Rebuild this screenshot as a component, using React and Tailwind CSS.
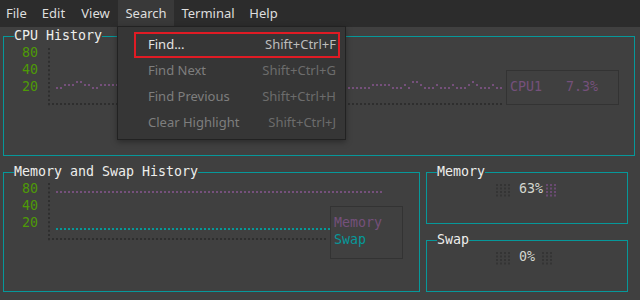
import React from "react";

const MONO = "font-['DejaVu_Sans_Mono',monospace] text-[13.3px] leading-[17px]";
const UI = "font-['Noto_Sans',sans-serif] text-[13px]";

function range(n) {
  return Array.from({ length: n }, (_, i) => i);
}

function Panel({ title, className, children }) {
  return (
    <div className={`relative border border-[#06989a] ${className}`}>
      <span className={`absolute left-[10px] top-[-10px] bg-[#404040] text-[#eeeeec] ${MONO}`}>{title}</span>
      {children}
    </div>
  );
}

function Labels() {
  return (
    <div className={`ml-[18px] flex w-[16px] flex-col text-right text-[#4e9a06] ${MONO}`}>
      <span>80</span>
      <span>40</span>
      <span>20</span>
    </div>
  );
}

const CPU_LEVELS =
  "0011122110011111010000000000000001110000000001111100000000000000001111000000000111110001022100010001000121000100010";

function CpuChart() {
  return (
    <svg width="456" height="62" className="ml-[9px] shrink-0">
      {range(14).map((k) => (
        <rect key={"v" + k} x="1" y={4 + k * 4.25} width="2" height="2" fill="#2e2e2e" />
      ))}
      {range(114).map((k) => (
        <rect key={"h" + k} x={1 + 4 * k} y="59" width="2" height="2" fill="#2e2e2e" />
      ))}
      {range(112).map((i) => {
        const l = Number(CPU_LEVELS[i] || 0);
        const y = l === 0 ? 43 : l === 1 ? 40 : 37;
        return <rect key={"p" + i} x={9 + 4 * i} y={y} width="2" height="2" fill="#75507b" />;
      })}
    </svg>
  );
}

function MemChart() {
  return (
    <svg width="372" height="62" className="ml-[9px] shrink-0">
      {range(14).map((k) => (
        <rect key={"v" + k} x="1" y={3 + k * 4.25} width="2" height="2" fill="#2e2e2e" />
      ))}
      {range(70).map((k) => (
        <rect key={"h" + k} x={1 + 4 * k} y="58" width="2" height="2" fill="#2e2e2e" />
      ))}
      {range(82).map((i) => (
        <rect key={"p" + i} x={9 + 4 * i} y="11" width="2" height="2" fill="#75507b" />
      ))}
      {range(69).map((i) => (
        <rect key={"t" + i} x={9 + 4 * i} y="48" width="2" height="2" fill="#06989a" />
      ))}
    </svg>
  );
}

function Dots({ cols, color, offset = 0 }) {
  const ys = [4, 7.5, 11, 14.5];
  return (
    <svg width={offset + cols * 4} height="17" className="shrink-0">
      {range(cols).map((c) =>
        ys.map((y, r) => (
          <rect key={c + "-" + r} x={offset + c * 4} y={y} width="2" height="2" fill={color} />
        ))
      )}
    </svg>
  );
}

function Gauge({ title, value, rightColor, rightOffset }) {
  return (
    <Panel title={title} className="h-[52px] w-[202px]">
      <div className="flex pt-[7px]">
        <div className="ml-[69px]">
          <Dots cols={4} color="#343434" />
        </div>
        <span className={`ml-[7px] text-[#d3d7cf] ${MONO}`}>{value}</span>
        <Dots cols={3} color={rightColor} offset={rightOffset} />
      </div>
    </Panel>
  );
}

function MenuItem({ label, shortcut, active }) {
  return (
    <div
      className={`ml-[16px] mr-[5px] flex h-[26px] items-center justify-between border-2 pl-[12px] pr-[2px] ${
        active ? "border-[#e01b24]" : "border-transparent"
      }`}
    >
      <span className={active ? "text-[#e4e4e4]" : "text-[#7e7e7e]"}>{label}</span>
      <span className={active ? "text-[#bdbdbd]" : "text-[#6c6c6c]"}>{shortcut}</span>
    </div>
  );
}

export default function App() {
  const items = [
    ["File", "w-[34px] pl-[6px] text-left"],
    ["Edit", "w-[39px] text-center"],
    ["View", "w-[45px] text-center"],
    ["Search", "w-[56px] text-center bg-[#393939]"],
    ["Terminal", "w-[68px] text-center"],
    ["Help", "w-[43px] text-center"],
  ];
  return (
    <div className="relative h-[300px] w-[640px] overflow-hidden bg-[#404040]">
      <div className={`flex h-[27px] bg-[#2c2c2c] text-[#dedede] ${UI}`}>
        {items.map(([l, c]) => (
          <div key={l} className={`flex h-full items-center ${c} ${l === "File" ? "" : "justify-center"}`}>
            {l}
          </div>
        ))}
      </div>

      <div className="flex h-[273px] flex-col pt-[9px]">
        <Panel title="CPU History" className="ml-[3px] h-[120px] w-[632px]">
          <div className="flex pt-[7px]">
            <Labels />
            <CpuChart />
          </div>
          <div className={`absolute left-[502px] top-[33px] h-[35px] w-[113px] border border-[#333333] pl-[3px] pt-[7px] text-[#75507b] ${MONO} whitespace-pre`}>
            {"CPU1   7.3%"}
          </div>
        </Panel>

        <div className="mt-[16px] flex">
          <Panel title="Memory and Swap History" className="ml-[3px] h-[120px] w-[417px]">
            <div className="flex pt-[7px]">
              <Labels />
              <MemChart />
            </div>
            <div className={`absolute left-[326px] top-[33px] flex h-[53px] w-[73px] flex-col border border-[#333333] bg-[#404040] pl-[3px] pt-[7px] ${MONO}`}>
              <span className="text-[#75507b]">Memory</span>
              <span className="text-[#06989a]">Swap</span>
            </div>
          </Panel>
          <div className="ml-[6px] flex flex-col gap-[16px]">
            <Gauge title="Memory" value="63%" rightColor="#6a4a72" rightOffset={3} />
            <Gauge title="Swap" value="0%" rightColor="#343434" offset={0} rightOffset={7} />
          </div>
        </div>
      </div>

      <div className={`absolute left-[117px] top-[26px] h-[114px] w-[229px] border border-[#222222] bg-[#363636] pt-[5px] shadow-[0_2px_6px_rgba(0,0,0,0.35)] ${UI}`}>
        <MenuItem label="Find..." shortcut="Shift+Ctrl+F" active />
        <MenuItem label="Find Next" shortcut="Shift+Ctrl+G" />
        <MenuItem label="Find Previous" shortcut="Shift+Ctrl+H" />
        <MenuItem label="Clear Highlight" shortcut="Shift+Ctrl+J" />
      </div>
    </div>
  );
}
